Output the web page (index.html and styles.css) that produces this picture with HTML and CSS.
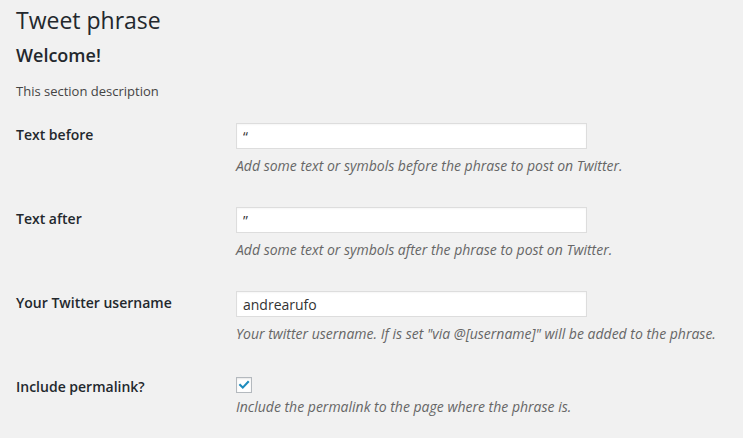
FILE: index.html
```html
<!DOCTYPE html>
<html lang="en">
<head>
<meta charset="utf-8">
<title>Tweet phrase</title>
<link rel="stylesheet" href="styles.css">
</head>
<body>
<div class="wrap">
  <h2 class="page-title">Tweet phrase</h2>
  <h3 class="section-title">Welcome!</h3>
  <p class="section-desc">This section description</p>
  <div class="form-table">
    <div class="row">
      <label class="label" for="before">Text before</label>
      <div class="field">
        <input class="text-input" id="before" type="text" value="“">
        <p class="desc">Add some text or symbols before the phrase to post on Twitter.</p>
      </div>
    </div>
    <div class="row">
      <label class="label" for="after">Text after</label>
      <div class="field">
        <input class="text-input" id="after" type="text" value="”">
        <p class="desc">Add some text or symbols after the phrase to post on Twitter.</p>
      </div>
    </div>
    <div class="row">
      <label class="label" for="user">Your Twitter username</label>
      <div class="field">
        <input class="text-input" id="user" type="text" value="andrearufo">
        <p class="desc">Your twitter username. If is set "via @[username]" will be added to the phrase.</p>
      </div>
    </div>
    <div class="row">
      <label class="label">Include permalink?</label>
      <div class="field">
        <span class="checkbox"><svg viewBox="0 0 16 16" width="16" height="16"><path d="M3.6 8.1 L6.6 11 L12.6 4.6" fill="none" stroke="#1e8cbe" stroke-width="2.4" stroke-linecap="square"/></svg></span>
        <p class="desc desc-check">Include the permalink to the page where the phrase is.</p>
      </div>
    </div>
  </div>
</div>
</body>
</html>
```
FILE: styles.css
```css
html, body {
  margin: 0;
  padding: 0;
  background: #f1f1f1;
}
body {
  font-family: "Open Sans", "Liberation Sans", sans-serif;
  color: #444;
  font-size: 13px;
}
.wrap {
  padding: 0 0 0 16px;
}
.page-title {
  margin: 0;
  padding-top: 6px;
  font-size: 23px;
  line-height: 29px;
  font-weight: 400;
  color: #23282d;
}
.section-title {
  margin: 8px 0 0;
  font-size: 18px;
  line-height: 24px;
  font-weight: 600;
  color: #23282d;
}
.section-desc {
  margin: 14px 0 0;
  font-size: 13px;
  line-height: 20px;
  color: #444;
}
.form-table {
  margin-top: 7px;
}
.row {
  display: grid;
  grid-template-columns: 220px 1fr;
  padding: 15px 0 16px;
}
.label {
  padding-top: 2px;
  font-size: 14px;
  line-height: 20px;
  font-weight: 600;
  color: #23282d;
}
.field {
  display: flex;
  flex-direction: column;
  align-items: flex-start;
}
.text-input {
  box-sizing: border-box;
  width: 351px;
  height: 26px;
  margin: 0;
  padding: 0 6px;
  border: 1px solid #ddd;
  background: #fff;
  font-family: "Open Sans", "Liberation Sans", sans-serif;
  font-size: 14px;
  color: #333;
  outline: none;
  box-shadow: inset 0 1px 2px rgba(0,0,0,0.04);
}
.desc {
  margin: 7px 0 0;
  font-size: 14px;
  line-height: 20px;
  font-style: italic;
  color: #666;
}
.checkbox {
  box-sizing: border-box;
  display: flex;
  align-items: center;
  justify-content: center;
  width: 16px;
  height: 16px;
  margin-top: 2px;
  border: 1px solid #b4b9be;
  background: #fff;
  box-shadow: inset 0 1px 2px rgba(0,0,0,0.1);
}
.checkbox svg {
  width: 14px;
  height: 14px;
}
.desc-check {
  margin-top: 4px;
}
```
